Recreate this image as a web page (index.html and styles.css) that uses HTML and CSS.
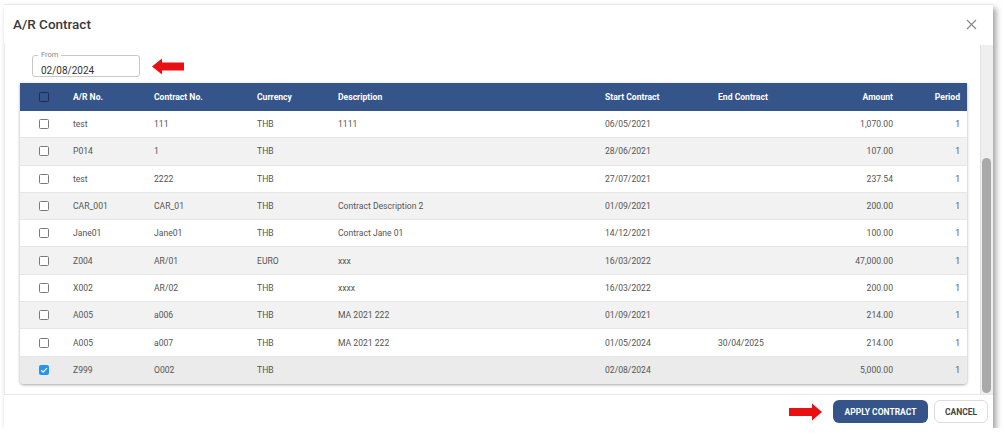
FILE: index.html
```html
<!DOCTYPE html>
<html>
<head>
<meta charset="utf-8">
<link rel="stylesheet" href="styles.css">
</head>
<body>
<div class="dialog">
  <div class="title-bar">
    <h1 class="title">A/R Contract</h1>
    <svg class="close" width="11" height="11" viewBox="0 0 11 11"><path d="M1 1L10 10M10 1L1 10" stroke="#8a8a8a" stroke-width="1.2" fill="none"/></svg>
  </div>
  <div class="content">
    <div class="scroll-area">
      <div class="filter">
        <div class="field">
          <span class="field-label">From</span>
          <span class="field-value">02/08/2024</span>
        </div>
        <svg class="arrow" width="34" height="17" viewBox="0 0 34 17"><polygon points="0,8.5 10,0.5 10,4.5 32,4.5 32,12.5 10,12.5 10,16.5" fill="#e81010"/></svg>
      </div>
      <div class="table">
        <div class="row head">
          <div class="cell"><span class="cb cb-head"></span></div>
          <div class="cell">A/R No.</div>
          <div class="cell">Contract No.</div>
          <div class="cell">Currency</div>
          <div class="cell">Description</div>
          <div class="cell">Start Contract</div>
          <div class="cell">End Contract</div>
          <div class="cell num">Amount</div>
          <div class="cell num">Period</div>
        </div>
        <div class="row">
          <div class="cell"><span class="cb"></span></div>
          <div class="cell">test</div><div class="cell">111</div><div class="cell">THB</div><div class="cell">1111</div>
          <div class="cell">06/05/2021</div><div class="cell"></div><div class="cell num">1,070.00</div><div class="cell num">1</div>
        </div>
        <div class="row alt">
          <div class="cell"><span class="cb"></span></div>
          <div class="cell">P014</div><div class="cell">1</div><div class="cell">THB</div><div class="cell"></div>
          <div class="cell">28/06/2021</div><div class="cell"></div><div class="cell num">107.00</div><div class="cell num">1</div>
        </div>
        <div class="row">
          <div class="cell"><span class="cb"></span></div>
          <div class="cell">test</div><div class="cell">2222</div><div class="cell">THB</div><div class="cell"></div>
          <div class="cell">27/07/2021</div><div class="cell"></div><div class="cell num">237.54</div><div class="cell num">1</div>
        </div>
        <div class="row alt">
          <div class="cell"><span class="cb"></span></div>
          <div class="cell">CAR_001</div><div class="cell">CAR_01</div><div class="cell">THB</div><div class="cell">Contract Description 2</div>
          <div class="cell">01/09/2021</div><div class="cell"></div><div class="cell num">200.00</div><div class="cell num">1</div>
        </div>
        <div class="row">
          <div class="cell"><span class="cb"></span></div>
          <div class="cell">Jane01</div><div class="cell">Jane01</div><div class="cell">THB</div><div class="cell">Contract Jane 01</div>
          <div class="cell">14/12/2021</div><div class="cell"></div><div class="cell num">100.00</div><div class="cell num">1</div>
        </div>
        <div class="row alt">
          <div class="cell"><span class="cb"></span></div>
          <div class="cell">Z004</div><div class="cell">AR/01</div><div class="cell">EURO</div><div class="cell">xxx</div>
          <div class="cell">16/03/2022</div><div class="cell"></div><div class="cell num">47,000.00</div><div class="cell num">1</div>
        </div>
        <div class="row">
          <div class="cell"><span class="cb"></span></div>
          <div class="cell">X002</div><div class="cell">AR/02</div><div class="cell">THB</div><div class="cell">xxxx</div>
          <div class="cell">16/03/2022</div><div class="cell"></div><div class="cell num">200.00</div><div class="cell num">1</div>
        </div>
        <div class="row alt">
          <div class="cell"><span class="cb"></span></div>
          <div class="cell">A005</div><div class="cell">a006</div><div class="cell">THB</div><div class="cell">MA 2021 222</div>
          <div class="cell">01/09/2021</div><div class="cell"></div><div class="cell num">214.00</div><div class="cell num">1</div>
        </div>
        <div class="row">
          <div class="cell"><span class="cb"></span></div>
          <div class="cell">A005</div><div class="cell">a007</div><div class="cell">THB</div><div class="cell">MA 2021 222</div>
          <div class="cell">01/05/2024</div><div class="cell">30/04/2025</div><div class="cell num">214.00</div><div class="cell num">1</div>
        </div>
        <div class="row selected">
          <div class="cell"><span class="cb cb-checked"><svg width="10" height="10" viewBox="0 0 10 10"><path d="M2.2 5.2L4.2 7.1L7.9 3.1" stroke="#fff" stroke-width="1.2" fill="none"/></svg></span></div>
          <div class="cell">Z999</div><div class="cell">O002</div><div class="cell">THB</div><div class="cell"></div>
          <div class="cell">02/08/2024</div><div class="cell"></div><div class="cell num">5,000.00</div><div class="cell num">1</div>
        </div>
      </div>
    </div>
    <div class="scrollbar"><div class="thumb"></div></div>
  </div>
  <div class="footer">
    <svg class="arrow" width="34" height="18" viewBox="0 0 34 18"><polygon points="34,9 24,0.5 24,5 1,5 1,13 24,13 24,17.5" fill="#e81010"/></svg>
    <button class="btn btn-primary">APPLY CONTRACT</button>
    <button class="btn btn-secondary">CANCEL</button>
  </div>
</div>
</body>
</html>
```
FILE: styles.css
```css
* { box-sizing: border-box; }
body {
  margin: 0;
  background: #ffffff;
  font-family: Roboto, "Liberation Sans", Arial, sans-serif;
}
.dialog {
  margin: 4px 0 0 4px;
  width: 989px;
  height: 424px;
  background: #fff;
  border-top: 1px solid #e3e8ef;
  box-shadow: 3px 4px 6px rgba(0, 0, 0, 0.38);
  display: flex;
  flex-direction: column;
}
.title-bar {
  height: 38px;
  display: flex;
  align-items: center;
  justify-content: space-between;
  padding: 0 16px 0 9px;
}
.title {
  margin: 0;
  font-size: 13.5px;
  font-weight: 500;
  color: #3a3a3a;
}
.close { margin-top: 1px; }
.content {
  flex: 1;
  display: flex;
  min-height: 0;
}
.scroll-area {
  flex: 1;
  padding: 12px 10px 0 15px;
  border-left: 1px solid #ececec;
}
.filter {
  display: flex;
  align-items: center;
  gap: 12px;
  margin-left: 12px;
}
.field {
  position: relative;
  width: 108px;
  height: 22px;
  border: 1px solid #c8c8c8;
  border-radius: 3px;
  padding: 3px 0 0 8px;
}
.field-label {
  position: absolute;
  top: -5px;
  left: 5px;
  padding: 0 3px;
  background: #fff;
  font-size: 7.5px;
  color: #888;
  line-height: 8px;
}
.field-value {
  font-size: 10px;
  color: #333;
  line-height: 14px;
}
.table {
  margin-top: 6px;
  width: 947px;
  border-radius: 0 0 4px 4px;
  box-shadow: 0 1px 3px rgba(0, 0, 0, 0.35);
  overflow: hidden;
}
.row {
  display: grid;
  grid-template-columns: 53px 81px 103px 81px 267px 113px 91px 84px 67px;
  padding-right: 7px;
  height: 27.3px;
  align-items: center;
  background: #fff;
  border-bottom: 1px solid #e6e6e6;
  font-size: 8.6px;
  color: #555;
}
.row.alt { background: #f2f2f2; }
.row.selected { background: #ebebeb; border-bottom: none; }
.row.head {
  height: 28px;
  background: #34548a;
  color: #fff;
  font-weight: 700;
  border-bottom: none;
}
.cell {
  white-space: nowrap;
}
.cell:first-child {
  padding-left: 19px;
  display: flex;
  align-items: center;
}
.num { text-align: right; }
.cb {
  display: inline-block;
  width: 10px;
  height: 10px;
  border: 1.3px solid #7a7a7a;
  border-radius: 1.5px;
  background: #fff;
}
.cb-head {
  border-color: #1c2d4c;
  background: transparent;
}
.cb-checked {
  background: #2196f3;
  border: none;
  border-radius: 2px;
  display: flex;
  align-items: center;
  justify-content: center;
}
.scrollbar {
  width: 13px;
  background: #efefef;
  border-left: 1px solid #e2e2e2;
  margin-top: 2px;
  padding: 113px 2px 2px 1px;
}
.thumb {
  height: 235px;
  background: #a9a9a9;
  border-radius: 5px;
}
.footer {
  height: 34px;
  border-top: 1px solid #e8e8e8;
  display: flex;
  align-items: center;
  justify-content: flex-end;
  padding-right: 5px;
  gap: 6px;
}
.footer .arrow { margin-right: 5px; }
.btn {
  height: 23px;
  border-radius: 6px;
  font-family: Roboto, "Liberation Sans", Arial, sans-serif;
  font-size: 8.5px;
  font-weight: 700;
  padding: 0;
  cursor: pointer;
}
.btn-primary {
  width: 95px;
  background: #34548a;
  color: #fff;
  border: none;
}
.btn-secondary {
  width: 54px;
  background: #fff;
  color: #444;
  border: 1px solid #dcdcdc;
}
```
